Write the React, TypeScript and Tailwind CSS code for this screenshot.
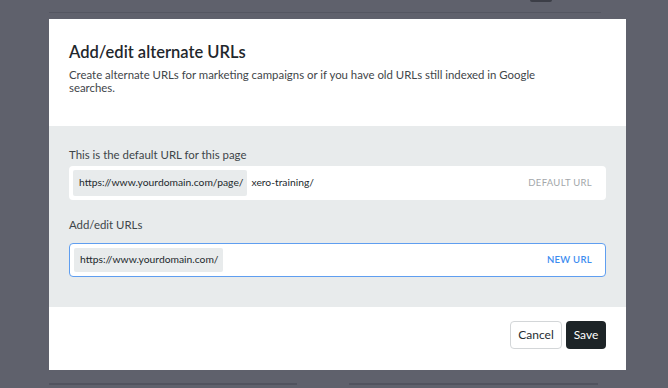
import React from "react";

export default function App() {
  return (
    <div className="w-[668px] h-[388px] bg-[#5f616c] overflow-hidden font-['Lato',sans-serif]">
      <div className="ml-[49px] w-[552px] h-[13px] border-b border-[#545661] flex justify-end pr-[49px]">
        <div className="w-[22px] h-[2px] bg-[#3c3e47] rounded-b-[3px]" />
      </div>
      <div className="ml-[49px] mt-[6px] w-[577px] bg-white">
        <div className="h-[107px] px-5 pt-[21px]">
          <h2 className="text-[16.5px] leading-[24px] font-semibold text-[#1f272c]">
            Add/edit alternate URLs
          </h2>
          <p className="mt-[4px] text-[11.4px] leading-[13.33px] text-[#3f464a] w-[490px]">
            Create alternate URLs for marketing campaigns or if you have old URLs still indexed in Google searches.
          </p>
        </div>
        <div className="h-[181px] bg-[#e8ebec] px-5 pt-[21px]">
          <div className="text-[11.4px] leading-[16px] text-[#3e4549]">This is the default URL for this page</div>
          <div className="mt-[3px] h-[34px] bg-white rounded-[4px] p-[4px] flex items-center text-[10.3px] text-[#22292d]">
            <div className="h-full bg-[#e8ebec] rounded-[2px] flex items-center pl-[6px] pr-[4px]">
              https://www.yourdomain.com/page/
            </div>
            <span className="ml-[4px]">xero-training/</span>
            <span className="ml-auto mr-[10px] text-[9.5px] tracking-[0.3px] text-[#a3a7aa]">DEFAULT URL</span>
          </div>
          <div className="mt-[17px] text-[11.4px] leading-[16px] text-[#3e4549]">Add/edit URLs</div>
          <div className="mt-[10px] h-[34px] bg-white rounded-[4px] border border-[#5f9ef0] p-[4px] flex items-center text-[10.3px] text-[#22292d]">
            <div className="h-full bg-[#e8ebec] rounded-[2px] flex items-center pl-[6px] pr-[4px]">
              https://www.yourdomain.com/
            </div>
            <span className="ml-auto mr-[9px] text-[9.5px] tracking-[0.3px] text-[#3d8cf0] font-semibold">NEW URL</span>
          </div>
        </div>
        <div className="h-[63px] flex justify-end items-start pt-[14px] pr-[20px] gap-[4px]">
          <button className="h-[28px] w-[52px] border border-[#d3d6d8] rounded-[4px] bg-white text-[12px] text-[#262d31]">
            Cancel
          </button>
          <button className="h-[28px] w-[40px] rounded-[4px] bg-[#1d2427] text-[12px] text-white">
            Save
          </button>
        </div>
      </div>
      <div className="mt-[13px] flex">
        <div className="ml-[49px] w-[248px] h-[2px] bg-[#51535e]" />
        <div className="ml-[52px] w-[249px] h-[2px] bg-[#51535e]" />
      </div>
    </div>
  );
}
